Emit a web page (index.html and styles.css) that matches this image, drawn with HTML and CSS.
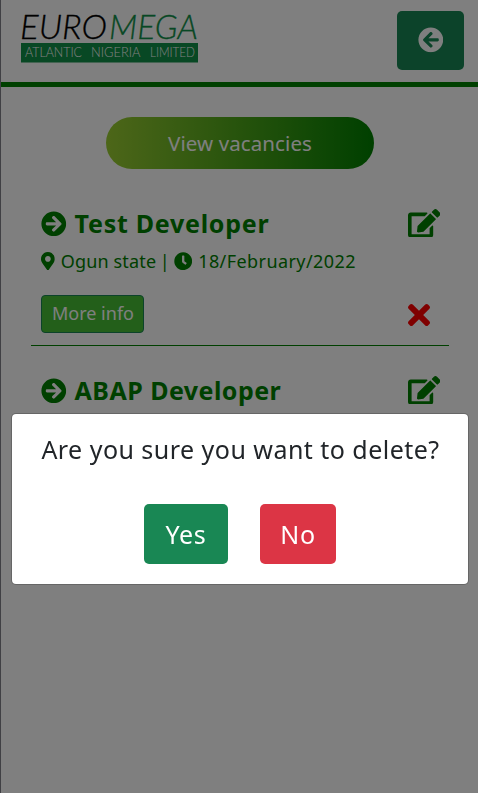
FILE: index.html
```html
<!DOCTYPE html>
<html lang="en">
<head>
<meta charset="utf-8">
<title>Vacancies</title>
<link rel="stylesheet" href="styles.css">
</head>
<body>
<svg class="sprite" aria-hidden="true">
  <symbol id="arrow" viewBox="0 0 512 512"><path d="M256 504C119 504 8 393 8 256S119 8 256 8s248 111 248 248-111 248-248 248zm28.9-143.6L209.4 288H392c13.3 0 24-10.7 24-24v-16c0-13.3-10.7-24-24-24H209.4l75.5-72.4c9.7-9.3 9.9-24.8.4-34.3l-11-10.9c-9.4-9.4-24.6-9.4-33.9 0L107.7 239c-9.4 9.4-9.4 24.6 0 33.9l132.7 132.7c9.4 9.4 24.6 9.4 33.9 0l11-10.9c9.5-9.5 9.3-25-.4-34.3z"/></symbol>
  <symbol id="marker" viewBox="0 0 384 512"><path d="M172.268 501.67C26.97 291.031 0 269.413 0 192 0 85.961 85.961 0 192 0s192 85.961 192 192c0 77.413-26.97 99.031-172.268 309.67-9.535 13.774-29.93 13.773-39.464 0zM192 272c44.183 0 80-35.817 80-80s-35.817-80-80-80-80 35.817-80 80 35.817 80 80 80z"/></symbol>
  <symbol id="clock" viewBox="0 0 512 512"><path d="M256,8C119,8,8,119,8,256S119,504,256,504,504,393,504,256,393,8,256,8Zm92.49,313h0l-20,25a16,16,0,0,1-22.49,2.5h0l-67-49.72a40,40,0,0,1-15-31.23V112a16,16,0,0,1,16-16h32a16,16,0,0,1,16,16V256l58,42.5A16,16,0,0,1,348.49,321Z"/></symbol>
  <symbol id="edit" viewBox="0 0 576 512"><path d="M402.6 83.2l90.2 90.2c3.8 3.8 3.8 10 0 13.8L274.4 405.6l-92.8 10.3c-12.4 1.4-22.9-9.1-21.5-21.5l10.3-92.8L388.8 83.2c3.8-3.8 10-3.8 13.8 0zm162-22.9l-48.8-48.8c-15.2-15.2-39.9-15.2-55.2 0l-35.4 35.4c-3.8 3.8-3.8 10 0 13.8l90.2 90.2c3.8 3.8 10 3.8 13.8 0l35.4-35.4c15.2-15.3 15.2-40 0-55.2zM384 346.2V448H64V128h229.8c3.2 0 6.2-1.3 8.5-3.5l40-40c7.6-7.6 2.2-20.5-8.5-20.5H48C21.5 64 0 85.5 0 112v352c0 26.5 21.5 48 48 48h352c26.5 0 48-21.5 48-48V306.2c0-10.7-12.9-16-20.5-8.5l-40 40c-2.2 2.3-3.5 5.3-3.5 8.5z"/></symbol>
  <symbol id="times" viewBox="0 0 352 512"><path d="M242.72 256l100.07-100.07c12.28-12.28 12.28-32.19 0-44.48l-22.24-22.24c-12.28-12.28-32.19-12.28-44.48 0L176 189.28 75.93 89.21c-12.28-12.28-32.19-12.28-44.48 0L9.21 111.45c-12.28 12.28-12.28 32.19 0 44.48L109.28 256 9.21 356.07c-12.28 12.28-12.28 32.19 0 44.48l22.24 22.24c12.28 12.28 32.2 12.28 44.48 0L176 322.72l100.07 100.07c12.28 12.28 32.2 12.28 44.48 0l22.24-22.24c12.28-12.28 12.28-32.19 0-44.48L242.72 256z"/></symbol>
</svg>
<div class="page">
  <header class="header">
    <svg class="logo" viewBox="0 0 180 52" role="img" aria-label="Euromega Atlantic Nigeria Limited">
      <text class="logo-name" x="-1" y="28" textLength="87" lengthAdjust="spacingAndGlyphs">EURO</text>
      <text class="logo-name logo-green" x="88" y="28" textLength="89" lengthAdjust="spacingAndGlyphs">MEGA</text>
      <rect class="logo-bar" x="0" y="32" width="177" height="19.5"/>
      <text class="logo-sub" x="4" y="46" textLength="57" lengthAdjust="spacingAndGlyphs">ATLANTIC</text>
      <text class="logo-sub" x="70" y="46" textLength="49.500" lengthAdjust="spacingAndGlyphs">NIGERIA</text>
      <text class="logo-sub" x="129" y="46" textLength="45" lengthAdjust="spacingAndGlyphs">LIMITED</text>
    </svg>
    <button class="back" aria-label="Back"><svg class="circle"><use href="#arrow"/></svg></button>
  </header>
  <main class="main">
    <button class="view">View vacancies</button>
    <article class="job">
      <div class="row">
        <h2 class="title"><svg class="circle flip"><use href="#arrow"/></svg><span class="t-test">Test Developer</span></h2>
        <svg class="edit"><use href="#edit"/></svg>
      </div>
      <div class="meta"><svg class="marker"><use href="#marker"/></svg><span class="place">Ogun state</span><span class="sep">|</span><svg class="clock"><use href="#clock"/></svg><span class="date">18/February/2022</span></div>
      <div class="row actions">
        <button class="more">More info</button>
        <svg class="times"><use href="#times"/></svg>
      </div>
    </article>
    <article class="job last">
      <div class="row">
        <h2 class="title"><svg class="circle flip"><use href="#arrow"/></svg><span class="t-abap">ABAP Developer</span></h2>
        <svg class="edit"><use href="#edit"/></svg>
      </div>
    </article>
  </main>
</div>
<div class="backdrop">
  <div class="modal" role="dialog" aria-modal="true">
    <p class="question">Are you sure you want to delete?</p>
    <div class="choices">
      <button class="choice yes">Yes</button>
      <button class="choice no">No</button>
    </div>
  </div>
</div>
</body>
</html>
```
FILE: styles.css
```css
* { box-sizing: border-box; }
body { margin: 0; background: #fff; font-family: "Noto Sans", sans-serif; color: #212529; overflow: hidden; }
button { font: inherit; padding: 0; border: 0; display: flex; align-items: center; justify-content: center; white-space: nowrap; }
svg { fill: currentColor; flex: none; display: block; }
.sprite { position: absolute; width: 0; height: 0; }
.page { height: 793px; border-left: 1px solid #808088; }
.header { height: 87px; border-bottom: 5px solid #008000; display: flex; justify-content: space-between; align-items: flex-start; padding: 11px 14px 0 20px; }
.logo { width: 180px; height: 52px; overflow: visible; }
.logo-name { font: italic 300 34px Lato, sans-serif; fill: #000; stroke: #000; stroke-width: .3px; }
.logo-name.logo-green { fill: #109048; stroke: #109048; }
.logo-bar { fill: #109048; }
.logo-sub { font: 300 14px Lato, sans-serif; fill: #fff; }
.back { width: 67px; height: 59px; border-radius: 5px; background: #198754; color: #fff; padding-bottom: 1px; }
.circle { width: 25.6px; height: 25.6px; }
.flip { transform: scaleX(-1); }
.main { padding: 30px 29px 0 30px; }
.view { width: 268px; height: 52px; margin: 0 0 0 75px; border-radius: 26px; color: #fff; background: linear-gradient(to right, #9acd32, #008000); font-size: 20.5px; letter-spacing: .1px; padding-bottom: 1px; }
.job { color: #008000; border-bottom: 1px solid #008000; height: 177px; padding: 38px 9px 0 10px; }
.job.last { border: 0; padding-top: 28px; }
.row { display: flex; justify-content: space-between; align-items: center; height: 32px; }
.title { display: flex; align-items: center; gap: 8px; margin: 0; font-size: 25px; line-height: 32px; font-weight: 700; white-space: nowrap; }
.title .circle { margin-top: 1px; }
.t-test { letter-spacing: .74px; }
.t-abap { letter-spacing: .46px; }
.edit { width: 32.4px; height: 28.8px; }
.meta { display: flex; align-items: center; margin-top: 10px; height: 24px; font-size: 18px; line-height: 24px; white-space: nowrap; }
.marker { width: 13.8px; height: 18.4px; margin-right: 6px; }
.place { width: 99px; letter-spacing: .15px; }
.sep { width: 14px; }
.clock { width: 18.4px; height: 18.4px; margin-right: 6px; }
.date { letter-spacing: .42px; }
.actions { margin-top: 22px; height: 38px; padding-right: 10px; }
.more { width: 103px; height: 38px; border: 1px solid #198754; border-radius: 4px; background: #46bf35; color: #fff; font-size: 18px; padding: 0 0 2px 1px; }
.times { width: 22px; height: 32px; margin-top: 2px; color: #f00; }
.backdrop { position: fixed; inset: 0; background: rgba(0,0,0,.5); padding: 413px 9px 0 11px; }
.modal { height: 172px; background: #fff; background-clip: padding-box; border: 1px solid rgba(0,0,0,.2); border-radius: 5px; padding: 17px 0 0; }
.question { margin: 0; text-align: center; font-size: 25px; line-height: 36px; letter-spacing: .47px; white-space: nowrap; padding-left: 1px; }
.choices { display: flex; justify-content: center; gap: 32px; margin-top: 37px; }
.choice { height: 60px; border-radius: 5px; color: #fff; font-size: 25px; letter-spacing: .6px; }
.yes { width: 84px; background: #198754; }
.no { width: 76px; background: #dc3545; }
```
